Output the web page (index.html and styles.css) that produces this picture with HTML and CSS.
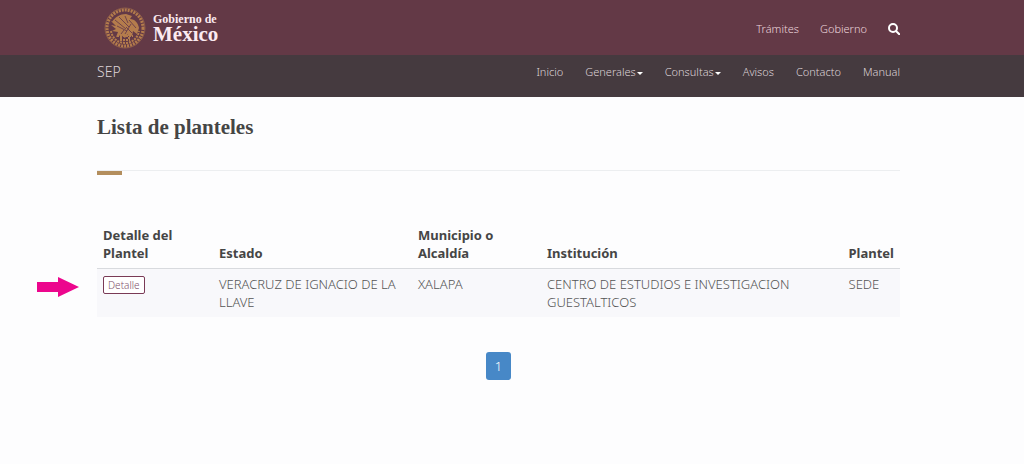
FILE: index.html
```
<!DOCTYPE html>
<html lang="es">
<head>
    <meta charset="UTF-8">
    <meta name="viewport" content="width=device-width, initial-scale=1.0">
    <title>Lista de planteles</title>
    <link rel="stylesheet" href="styles.css">
</head>
<body>
    <header class="gob-bar">
        <a class="logo" href="#">
            <svg class="seal" viewBox="0 0 42 42" aria-hidden="true">
                <circle class="ring-text" cx="21" cy="21" r="18"/>
                <circle class="ring" cx="21" cy="21" r="20"/>
                <path class="wreath" d="M7 24c1 7 7 12 14 12s13-5 14-12"/>
                <path class="eagle" d="M8 15c3-5 8-8 14-8l6 2-2 3c5 0 8 4 9 9l-2 6-4-3-1 5-4-2-3 4-4-3-5 2 2-5-6-1 4-2-5-4 5 1-5-5 6 2z"/>
                <path class="feather" d="M11 13l11 9M15 10l10 10M21 9l3 7M13 19l10 5M25 13l7 8M22 20l6 6M20 23l-3 4M27 17l-6 10"/>
                <path class="wreath" d="M13 29h16M16 33h10M17 27v5M25 27v5"/>
            </svg>
            <span class="logo-text">Gobierno de <strong>México</strong></span>
        </a>
        <nav class="gob-links">
            <a href="#">Trámites</a>
            <a href="#">Gobierno</a>
            <a href="#" aria-label="Buscar">
                <svg class="search" viewBox="0 0 12 12" aria-hidden="true">
                    <circle cx="5" cy="5" r="4"/>
                    <path d="M8 8l4 4"/>
                </svg>
            </a>
        </nav>
    </header>

    <div class="sub-bar">
        <a class="brand" href="#">SEP</a>
        <nav class="menu">
            <a href="#">Inicio</a>
            <a href="#">Generales<span class="caret"></span></a>
            <a href="#">Consultas<span class="caret"></span></a>
            <a href="#">Avisos</a>
            <a href="#">Contacto</a>
            <a href="#">Manual</a>
        </nav>
    </div>

    <main>
        <h1>Lista de planteles</h1>
        <hr>
        <div class="results">
            <svg class="arrow" viewBox="0 0 42 20" aria-hidden="true">
                <path d="M0 5h21V0l21 10-21 10v-5H0z"/>
            </svg>
            <table>
                <thead>
                    <tr>
                        <th class="col-detalle">Detalle del Plantel</th>
                        <th class="col-estado">Estado</th>
                        <th class="col-municipio">Municipio o Alcaldía</th>
                        <th>Institución</th>
                        <th class="col-plantel">Plantel</th>
                    </tr>
                </thead>
                <tbody>
                    <tr>
                        <td><button type="button" class="btn-detalle">Detalle</button></td>
                        <td>VERACRUZ DE IGNACIO DE LA LLAVE</td>
                        <td>XALAPA</td>
                        <td>CENTRO DE ESTUDIOS E INVESTIGACION GUESTALTICOS</td>
                        <td>SEDE</td>
                    </tr>
                </tbody>
            </table>
        </div>
        <nav class="pagination">
            <a href="#">1</a>
        </nav>
    </main>
</body>
</html>
```
FILE: styles.css
```
* {
    box-sizing: border-box;
}
body {
    margin: 0;
    background: #fdfdfe;
    color: #545454;
    font-family: "Noto Sans", "Open Sans", sans-serif;
    font-size: 13px;
    font-weight: 300;
    line-height: 18px;
}
a {
    color: inherit;
    text-decoration: none;
}
.gob-bar, .sub-bar, main {
    padding-left: 97px;
    padding-right: 124px;
}
.gob-bar, .sub-bar {
    display: flex;
    justify-content: space-between;
    font-size: 11px;
}

/* Header */
.gob-bar {
    height: 55px;
    background: #633946;
    color: #ecd5dc;
}
.logo {
    display: flex;
    align-items: center;
    gap: 7px;
    margin-left: 7px;
}
.seal {
    width: 42px;
    height: 42px;
    fill: none;
    stroke: #b47c4c;
}
.ring {
    stroke-width: 1;
    opacity: 0.5;
}
.ring-text {
    stroke-width: 3;
    stroke-dasharray: 2 1;
}
.wreath {
    stroke-width: 2;
    stroke-dasharray: 2 1;
}
.eagle {
    fill: #b47c4c;
    stroke: none;
}
.feather {
    stroke: #71434a;
}
.logo-text {
    color: #fbeaf0;
    font-family: "Liberation Serif", serif;
    font-size: 12px;
    font-weight: bold;
    line-height: 12px;
}
.logo-text strong {
    display: block;
    font-size: 21px;
    line-height: 18px;
}
.gob-links {
    display: flex;
    align-items: center;
    gap: 21px;
    padding-top: 3px;
}
.search {
    display: block;
    width: 12px;
    height: 12px;
    fill: none;
    stroke: #fff;
    stroke-width: 2;
}

/* Menu */
.sub-bar {
    height: 42px;
    padding-top: 8px;
    background: #453a3f;
    color: #ddd3d7;
}
.brand {
    font-size: 14px;
}
.menu {
    display: flex;
    gap: 22px;
}
.caret {
    display: inline-block;
    margin-left: 1px;
    border: 3px solid transparent;
    border-top-color: #fff;
    border-bottom: 0;
    vertical-align: middle;
}

/* Content */
h1 {
    margin: 0;
    padding-top: 18px;
    color: #454545;
    font-family: "Liberation Serif", serif;
    font-size: 21px;
    line-height: 24px;
}
hr {
    height: 5px;
    margin: 31px 0 45px;
    border: 0;
    border-top: 1px solid #eceef0;
    background: linear-gradient(#b38e5d, #b38e5d) no-repeat left / 25px 100%;
}
.results {
    position: relative;
}
.arrow {
    position: absolute;
    right: 100%;
    bottom: 20px;
    width: 42px;
    height: 20px;
    margin-right: 18px;
    fill: #ec068d;
}
table {
    width: 100%;
    border-collapse: collapse;
}
th, td {
    padding: 6px;
    text-align: left;
    vertical-align: top;
}
th {
    border-bottom: 1px solid #d8dade;
    color: #454545;
    font-weight: bold;
    vertical-align: bottom;
}
tbody tr {
    background: #f8f8fb;
}
.col-detalle {
    width: 116px;
}
.col-estado {
    width: 199px;
}
.col-municipio {
    width: 129px;
}
.col-plantel {
    width: 56px;
}
.btn-detalle {
    display: block;
    margin-top: 1px;
    padding: 0 4px;
    border: 1px solid #7a3a56;
    border-radius: 2px;
    background: #fff;
    color: #80506a;
    font: inherit;
    font-size: 10px;
    line-height: 16px;
}
.pagination {
    display: flex;
    justify-content: center;
    margin-top: 35px;
}
.pagination a {
    padding: 5px 9px;
    border-radius: 3px;
    background: #4788c7;
    color: #fff;
}
```
